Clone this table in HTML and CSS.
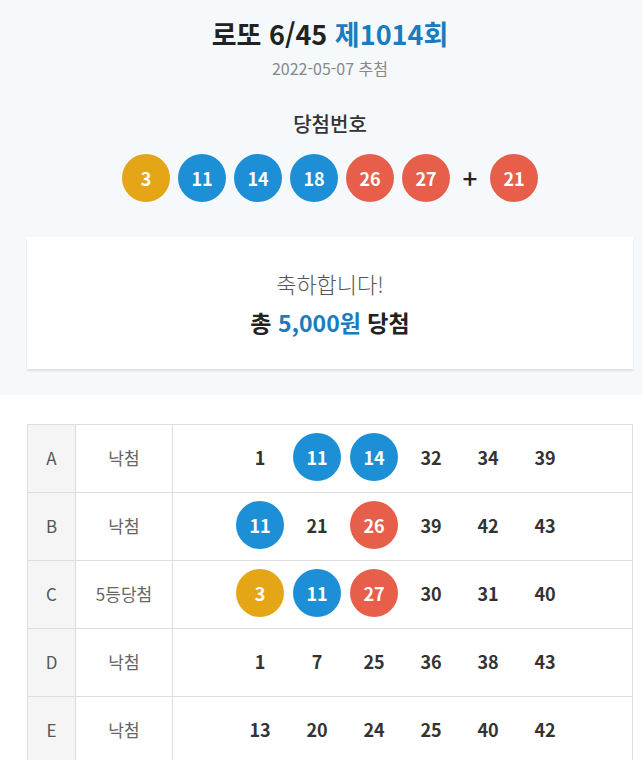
FILE: index.html
```html
<!DOCTYPE html>
<html lang="ko">
<head>
  <meta charset="UTF-8">
  <title>로또 6/45 제1014회</title>
  <link rel="stylesheet" href="styles.css">
</head>
<body>

  <div class="top">
    <h1>로또 6/45 <span class="round">제1014회</span></h1>
    <div class="date">2022-05-07 추첨</div>

    <div class="win-title">당첨번호</div>
    <div class="balls">
      <span class="ball yellow">3</span>
      <span class="ball blue">11</span>
      <span class="ball blue">14</span>
      <span class="ball blue">18</span>
      <span class="ball red">26</span>
      <span class="ball red">27</span>
      <span class="plus">+</span>
      <span class="ball red">21</span>
    </div>

    <div class="result">
      <div class="congrats">축하합니다!</div>
      <div class="prize">총 <span class="amount">5,000원</span> 당첨</div>
    </div>
  </div>

  <div class="games">
    <table class="game-table">
      <tr>
        <td class="slot">A</td>
        <td class="rank">낙첨</td>
        <td class="nums">
          <div class="num-row">
            <span class="num">1</span>
            <span class="num ball blue">11</span>
            <span class="num ball blue">14</span>
            <span class="num">32</span>
            <span class="num">34</span>
            <span class="num">39</span>
          </div>
        </td>
      </tr>
      <tr>
        <td class="slot">B</td>
        <td class="rank">낙첨</td>
        <td class="nums">
          <div class="num-row">
            <span class="num ball blue">11</span>
            <span class="num">21</span>
            <span class="num ball red">26</span>
            <span class="num">39</span>
            <span class="num">42</span>
            <span class="num">43</span>
          </div>
        </td>
      </tr>
      <tr>
        <td class="slot">C</td>
        <td class="rank">5등당첨</td>
        <td class="nums">
          <div class="num-row">
            <span class="num ball yellow">3</span>
            <span class="num ball blue">11</span>
            <span class="num ball red">27</span>
            <span class="num">30</span>
            <span class="num">31</span>
            <span class="num">40</span>
          </div>
        </td>
      </tr>
      <tr>
        <td class="slot">D</td>
        <td class="rank">낙첨</td>
        <td class="nums">
          <div class="num-row">
            <span class="num">1</span>
            <span class="num">7</span>
            <span class="num">25</span>
            <span class="num">36</span>
            <span class="num">38</span>
            <span class="num">43</span>
          </div>
        </td>
      </tr>
      <tr>
        <td class="slot">E</td>
        <td class="rank">낙첨</td>
        <td class="nums">
          <div class="num-row">
            <span class="num">13</span>
            <span class="num">20</span>
            <span class="num">24</span>
            <span class="num">25</span>
            <span class="num">40</span>
            <span class="num">42</span>
          </div>
        </td>
      </tr>
    </table>
  </div>

</body>
</html>
```

FILE: styles.css
```css
* {
  margin: 0;
  padding: 0;
  box-sizing: border-box;
}
body {
  font-family: "Noto Sans CJK KR", "Noto Sans", sans-serif;
  background: #fff;
  color: #333;
}
.top {
  background: #f6f9fc;
  padding: 16px 10px 26px 27px;
  text-align: center;
}
h1 {
  font-size: 27px;
  line-height: 36px;
  font-weight: 700;
  color: #222;
}
.round {
  color: #1a7cbf;
}
.date {
  margin-top: 5px;
  font-size: 16px;
  line-height: 22px;
  color: #888;
}
.win-title {
  margin-top: 31px;
  font-size: 20px;
  line-height: 28px;
  font-weight: 500;
  color: #333;
}
.balls {
  margin-top: 16px;
  display: flex;
  justify-content: center;
  align-items: center;
  gap: 8px;
}
.ball {
  width: 48px;
  height: 48px;
  border-radius: 50%;
  color: #fff;
  font-size: 18px;
  font-weight: 700;
  line-height: 48px;
  text-align: center;
}
.yellow {
  background: #e4a616;
}
.blue {
  background: #1c8fd6;
}
.red {
  background: #e75f4b;
}
.plus {
  width: 24px;
  font-size: 26px;
  font-weight: 500;
  color: #222;
  line-height: 48px;
}
.result {
  margin-top: 35px;
  background: #fff;
  padding: 31px 0;
  box-shadow: 0 2px 2px rgba(0, 0, 0, 0.1);
}
.congrats {
  font-size: 22px;
  line-height: 31px;
  font-weight: 300;
  color: #555;
}
.prize {
  margin-top: 7px;
  font-size: 23px;
  line-height: 32px;
  font-weight: 700;
  color: #222;
}
.amount {
  color: #1a7cbf;
}
.games {
  padding: 29px 10px 0 27px;
}
.game-table {
  width: 100%;
  border-collapse: collapse;
}
.game-table td {
  border: 1px solid #ddd;
  height: 68px;
  text-align: center;
  vertical-align: middle;
  padding-bottom: 3px;
}
.slot {
  width: 48px;
  background: #f5f5f5;
  font-size: 17px;
  color: #555;
}
.rank {
  width: 97px;
  font-size: 17px;
  color: #666;
}
.num-row {
  display: flex;
  justify-content: center;
  gap: 9px;
}
.num {
  width: 48px;
  height: 48px;
  line-height: 48px;
  font-size: 18px;
  font-weight: 700;
  color: #333;
  text-align: center;
}
.num.ball {
  color: #fff;
}
```
